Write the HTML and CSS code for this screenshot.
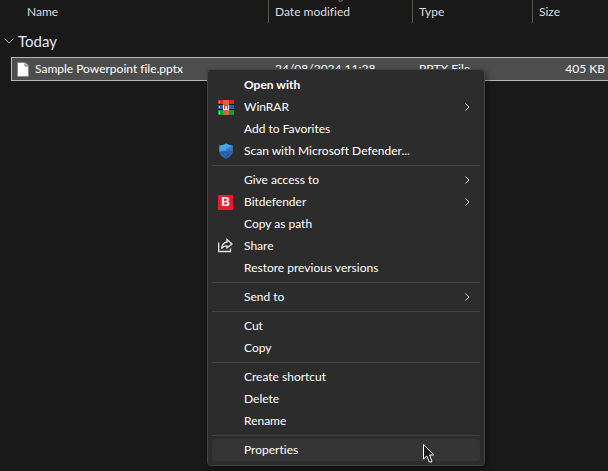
FILE: index.html
```
<!DOCTYPE html>
<html lang="en">

<head>
  <meta charset="UTF-8">
  <meta name="viewport" content="width=device-width, initial-scale=1.0">
  <title>File list</title>
  <link rel="stylesheet" href="styles.css">
</head>

<body>
  <main class="explorer">
    <table class="files">
      <colgroup>
        <col class="col-gutter">
        <col class="col-name">
        <col class="col-date">
        <col class="col-type">
        <col>
      </colgroup>
      <thead>
        <tr>
          <td></td>
          <th class="name" scope="col">Name</th>
          <th class="sorted" scope="col">
            Date modified
            <svg class="sort-arrow" width="7" height="4" viewBox="0 0 7 4" aria-hidden="true">
              <path d="M0.5 -1 L3.5 2 L6.5 -1" />
            </svg>
          </th>
          <th scope="col">Type</th>
          <th scope="col">Size</th>
        </tr>
      </thead>
      <tbody>
        <tr>
          <th class="group" colspan="5" scope="rowgroup">
            <button class="group-toggle" type="button" aria-expanded="true">
              <svg width="10" height="6" viewBox="0 0 10 6" aria-hidden="true">
                <path d="M0.5 0.5 L5 5 L9.5 0.5" />
              </svg>
              Today
            </button>
          </th>
        </tr>
        <tr class="file">
          <td class="gutter"></td>
          <td class="file-name">
            <div class="file-label">
              <svg width="12" height="15" viewBox="0 0 12 15" aria-hidden="true">
                <path d="M0.5 0.5 H8 L11.5 4 V14.5 H0.5 Z" fill="#fff" stroke="#8a8a8a" />
                <path d="M8 0.5 V4 H11.5" fill="#ddd" stroke="#777" />
              </svg>
              Sample Powerpoint file.pptx
            </div>
          </td>
          <td>24/08/2024 11:28</td>
          <td>PPTX File</td>
          <td class="file-size">405 KB</td>
        </tr>
      </tbody>
    </table>

    <div class="menu" role="menu">
      <button class="menu-item default" type="button" role="menuitem">Open with</button>
      <button class="menu-item" type="button" role="menuitem">
        <svg class="menu-icon" width="16" height="15" viewBox="0 0 16 15" shape-rendering="crispEdges" aria-hidden="true">
          <path d="M0 0h16v4H0z" fill="#e8202c" />
          <path d="M0 5h16v4H0z" fill="#3c5aa6" />
          <path d="M0 10h16v5H0z" fill="#169a38" />
          <path d="M0 4h16v1H0zM0 9h16v1H0z" fill="#151515" />
          <path d="M1 1h1v2h-1zM1 6h1v2h-1zM1 11h1v3h-1z" fill="#ffd45c" />
          <path d="M5 0h6v15H5z" fill="#e0613c" />
          <path d="M6 5h4v5H6z" fill="#c3402d" />
          <path d="M5 5h1v4h1v1H5zM10 5h1v5H9V9h1zM7 6h2v4H7z" fill="#f4e8e4" />
        </svg>
        WinRAR
        <svg class="menu-arrow" width="5" height="8" viewBox="0 0 5 8" aria-hidden="true">
          <path d="M0.5 0.5 L4 4 L0.5 7.5" />
        </svg>
      </button>
      <button class="menu-item" type="button" role="menuitem">Add to Favorites</button>
      <button class="menu-item" type="button" role="menuitem">
        <svg class="menu-icon" width="16" height="16" viewBox="0 0 16 16" aria-hidden="true">
          <path d="M8 0.5 C6 2 4 2.5 1.5 2.6 V8 C1.5 11.5 4.5 14 8 15.5 C11.5 14 14.5 11.5 14.5 8 V2.6 C12 2.5 10 2 8 0.5 Z" fill="#3c9ae0" />
          <path d="M1.5 8 H8 V15.5 C4.5 14 1.5 11.5 1.5 8 Z" fill="#2e62b0" />
          <path d="M8 8 V0.5 C10 2 12 2.5 14.5 2.6 V8 Z" fill="#2e78c8" />
          <path d="M8 8 H14.5 C14.5 11.5 11.5 14 8 15.5 Z" fill="#365aa8" />
          <path d="M8 0.5 L14 3 L1.5 9 V2.6 C4 2.5 6 2 8 0.5 Z" fill="#46a4e8" />
        </svg>
        Scan with Microsoft Defender...
      </button>
      <hr>
      <button class="menu-item" type="button" role="menuitem">
        Give access to
        <svg class="menu-arrow" width="5" height="8" viewBox="0 0 5 8" aria-hidden="true">
          <path d="M0.5 0.5 L4 4 L0.5 7.5" />
        </svg>
      </button>
      <button class="menu-item" type="button" role="menuitem">
        <span class="menu-icon bitdefender" aria-hidden="true">B</span>
        Bitdefender
        <svg class="menu-arrow" width="5" height="8" viewBox="0 0 5 8" aria-hidden="true">
          <path d="M0.5 0.5 L4 4 L0.5 7.5" />
        </svg>
      </button>
      <button class="menu-item" type="button" role="menuitem">Copy as path</button>
      <button class="menu-item" type="button" role="menuitem">
        <svg class="menu-icon share" width="16" height="16" viewBox="0 0 16 16" aria-hidden="true">
          <path d="M0.7 4.5 V13.5 H12.5 V10.5" />
          <path d="M9 1.5 L14 6 L9 10 V7.8 C6.5 7.8 5 8.5 3.5 10.5 C4 7 5.5 4.5 9 4 Z" />
        </svg>
        Share
      </button>
      <button class="menu-item" type="button" role="menuitem">Restore previous versions</button>
      <hr>
      <button class="menu-item" type="button" role="menuitem">
        Send to
        <svg class="menu-arrow" width="5" height="8" viewBox="0 0 5 8" aria-hidden="true">
          <path d="M0.5 0.5 L4 4 L0.5 7.5" />
        </svg>
      </button>
      <hr>
      <button class="menu-item" type="button" role="menuitem">Cut</button>
      <button class="menu-item" type="button" role="menuitem">Copy</button>
      <hr>
      <button class="menu-item" type="button" role="menuitem">Create shortcut</button>
      <button class="menu-item" type="button" role="menuitem">Delete</button>
      <button class="menu-item" type="button" role="menuitem">Rename</button>
      <hr>
      <button class="menu-item active" type="button" role="menuitem">Properties</button>
    </div>

    <svg class="pointer" width="12" height="19" viewBox="0 0 12 19" aria-hidden="true">
      <path d="M0.5 0.5 V15 L3.8 12 L6.3 18 H8.7 V16.5 L6.6 11 H10.8 Z" />
    </svg>
  </main>
</body>

</html>
```

FILE: styles.css
```
* {
  box-sizing: border-box;
}

body {
  margin: 0;
  background-color: #191919;
  color: #fff;
  font-family: Lato, "Open Sans", sans-serif;
  font-size: 12px;
  font-variant-ligatures: none;
  line-height: 16px;
}

button {
  border: none;
  background: none;
  color: inherit;
  font: inherit;
  font-variant-ligatures: inherit;
  text-align: left;
}

.explorer {
  position: relative;
  min-height: 100vh;
  overflow: hidden;
}

/* file list */
.files {
  width: 100%;
  table-layout: fixed;
  border-collapse: separate;
  border-spacing: 0;
}

.col-gutter {
  width: 11px;
}

.col-name {
  width: 257px;
}

.col-date {
  width: 144px;
}

.col-type {
  width: 120px;
}

.files th,
.files td {
  padding: 0 6px;
  font-weight: normal;
  text-align: left;
  white-space: nowrap;
}

.files thead th {
  height: 23px;
  border-left: 1px solid #635454;
  color: #dedede;
}

.files thead .name {
  padding-left: 16px;
  border-left: none;
}

.files .sorted {
  position: relative;
}

.sort-arrow {
  position: absolute;
  top: 0;
  left: 50%;
  margin-left: -4px;
  fill: none;
  stroke: #8a8a8a;
}

.files .group {
  height: 34px;
  padding: 2px 4px 0;
}

.group-toggle {
  display: flex;
  align-items: center;
  gap: 4px;
  padding: 0;
  color: #e4e8f8;
  font-size: 15px;
  line-height: 20px;
}

.group-toggle svg {
  fill: none;
  stroke: #a0a0a0;
}

.files .file td {
  height: 24px;
  padding-left: 7px;
  border: solid #b8b8b8;
  border-width: 1px 0;
  background-color: #4d4d4d;
}

.files .file .gutter {
  border: none;
  background: none;
}

.files .file .file-name {
  padding-left: 5px;
  border-left-width: 1px;
}

.file-label {
  display: flex;
  align-items: center;
  gap: 6px;
}

.files .file .file-size {
  padding-right: 3px;
  text-align: right;
}

/* context menu */
.menu {
  position: absolute;
  top: 69px;
  left: 207px;
  width: 278px;
  padding: 4px;
  border: 1px solid #424242;
  border-radius: 4px;
  background-color: #2c2c2c;
  box-shadow: 2px 3px 6px rgba(0, 0, 0, 0.4);
}

.menu hr {
  height: 1px;
  margin: 3px 0;
  border: none;
  background-color: #424242;
}

.menu-item {
  position: relative;
  display: flex;
  align-items: center;
  width: 100%;
  height: 22px;
  padding: 0 10px 0 32px;
  border-radius: 4px;
}

.menu-item.default {
  font-weight: bold;
}

.menu-item.active {
  background-color: #353535;
}

.menu-icon {
  position: absolute;
  left: 6px;
}

.menu-arrow {
  margin-left: auto;
  fill: none;
  stroke: #d8e4f0;
}

.bitdefender {
  width: 15px;
  height: 15px;
  background-color: #ec1c2c;
  font-family: "Liberation Sans", sans-serif;
  font-weight: bold;
  line-height: 15px;
  text-align: center;
}

.share {
  fill: none;
  stroke: #e8e8e8;
  stroke-width: 1.3;
}

.pointer {
  position: absolute;
  top: 444px;
  left: 423px;
  fill: #1c1c1c;
  stroke: #fff;
}
```
